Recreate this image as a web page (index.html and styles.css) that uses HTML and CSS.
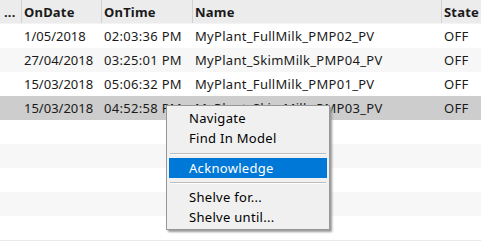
FILE: index.html
```html
<!DOCTYPE html>
<html lang="en">
  <head>
    <meta charset="UTF-8" />
    <title>Alarms</title>
    <link rel="stylesheet" href="styles.css">
  </head>
  <body>
    <div class="grid">
      <div class="row header">
        <div class="cell">...</div>
        <div class="cell">OnDate</div>
        <div class="cell">OnTime</div>
        <div class="cell">Name</div>
        <div class="cell">State</div>
      </div>
      <div class="row">
        <div class="cell"></div>
        <div class="cell date">1/05/2018</div>
        <div class="cell">02:03:36 PM</div>
        <div class="cell">MyPlant_FullMilk_PMP02_PV</div>
        <div class="cell">OFF</div>
      </div>
      <div class="row alt">
        <div class="cell"></div>
        <div class="cell date">27/04/2018</div>
        <div class="cell">03:25:01 PM</div>
        <div class="cell">MyPlant_SkimMilk_PMP04_PV</div>
        <div class="cell">OFF</div>
      </div>
      <div class="row">
        <div class="cell"></div>
        <div class="cell date">15/03/2018</div>
        <div class="cell">05:06:32 PM</div>
        <div class="cell">MyPlant_FullMilk_PMP01_PV</div>
        <div class="cell">OFF</div>
      </div>
      <div class="row selected">
        <div class="cell"></div>
        <div class="cell date">15/03/2018</div>
        <div class="cell">04:52:58 PM</div>
        <div class="cell">MyPlant_SkimMilk_PMP03_PV</div>
        <div class="cell">OFF</div>
      </div>
      <div class="row"></div>
      <div class="row alt"></div>
      <div class="row"></div>
      <div class="row alt"></div>
      <div class="row last"></div>
    </div>

    <div class="menu">
      <div class="item">Navigate</div>
      <div class="item">Find In Model</div>
      <div class="sep first"></div>
      <div class="item active">Acknowledge</div>
      <div class="sep"></div>
      <div class="item">Shelve for...</div>
      <div class="item">Shelve until...</div>
    </div>
  </body>
</html>
```

FILE: styles.css
```css
body {
  margin: 0;
  font-family: "Noto Sans", "Open Sans", sans-serif;
  font-size: 13px;
  letter-spacing: 0.3px;
  color: #1a1a1a;
  background-color: #fff;
  width: 481px;
  height: 242px;
  overflow: hidden;
}

.grid {
  display: flex;
  flex-direction: column;
}

.row {
  display: grid;
  grid-template-columns: 22px 80px 91px 249px 39px;
  height: 24px;
  background-color: #fff;
}

.row.alt {
  background-color: #f7f7f7;
}

.row.selected {
  background-color: #cdcdcd;
}

.row.last {
  border-bottom: 1px solid #ebebeb;
}

.cell {
  display: flex;
  align-items: center;
  padding-left: 2px;
  white-space: nowrap;
  overflow: hidden;
}

.cell.date {
  letter-spacing: 0;
}

.header {
  background-color: #ececec;
  font-weight: bold;
  letter-spacing: 0.2px;
  border-bottom: 1px solid #f4f4f4;
  height: 24px;
  box-sizing: border-box;
}

.header .cell {
  border-right: 1px solid #d2d2d2;
}

.header .cell:first-child {
  padding-left: 4px;
}

.header .cell:last-child {
  border-right: none;
}

.menu {
  position: absolute;
  left: 166px;
  top: 105px;
  width: 158px;
  padding: 2px;
  background-color: #f0f0f0;
  border: 1px solid #979797;
  box-shadow: 2px 2px 2px #999;
}

.item {
  height: 20px;
  line-height: 20px;
  padding-left: 20px;
  color: #000;
}

.item.active {
  background-color: #0078d7;
  color: #fff;
}

.sep {
  height: 1px;
  margin: 4px 1px 3px 1px;
  background-color: #bdbdbd;
  border-bottom: 1px solid #fff;
}

.sep.first {
  margin-top: 5px;
}
```
